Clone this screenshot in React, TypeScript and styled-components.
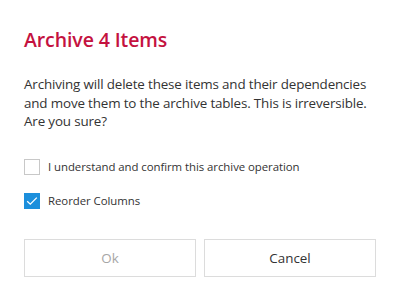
import React, { useState } from "react";
import styled, { createGlobalStyle } from "styled-components";

const Global = createGlobalStyle`
  html, body { margin: 0; padding: 0; background: #ffffff; }
  body { font-family: "Open Sans", "Noto Sans", "Liberation Sans", sans-serif; }
`;

const Dialog = styled.div`
  width: 399px;
  height: 304px;
  box-sizing: border-box;
  padding: 26px 23px 0 24px;
  display: flex;
  flex-direction: column;
  background: #fff;
`;

const Title = styled.h1`
  margin: 0;
  font-size: 19.5px;
  font-weight: 600;
  line-height: 28px;
  color: #c4123f;
  letter-spacing: -0.1px;
`;

const Body = styled.p`
  margin: 21px 0 0;
  font-size: 13.4px;
  line-height: 18.6px;
  color: #333333;
  letter-spacing: -0.15px;
`;

const Options = styled.div`
  margin-top: 28px;
  display: flex;
  flex-direction: column;
  gap: 18px;
`;

const Row = styled.label`
  display: flex;
  align-items: center;
  gap: 8px;
  font-size: 11.4px;
  color: #333333;
  cursor: pointer;
  height: 16px;
  letter-spacing: -0.05px;
`;

const Box = styled.span<{ $checked: boolean }>`
  width: 16px;
  height: 16px;
  box-sizing: border-box;
  border: 1px solid ${(p) => (p.$checked ? "#1c8fdc" : "#c8c8c8")};
  background: ${(p) => (p.$checked ? "#1c8fdc" : "#fff")};
  display: flex;
  align-items: center;
  justify-content: center;
  flex-shrink: 0;
`;

const Buttons = styled.div`
  margin-top: 30px;
  display: grid;
  grid-template-columns: 172px 172px;
  gap: 8px;
`;

const Button = styled.button<{ $disabled?: boolean }>`
  height: 38px;
  box-sizing: border-box;
  border: 1px solid #dcdcdc;
  background: #fff;
  font-family: inherit;
  font-size: 13.4px;
  color: ${(p) => (p.$disabled ? "#a6a6a6" : "#333333")};
  cursor: ${(p) => (p.$disabled ? "default" : "pointer")};
  padding: 0;
`;

const Check = () => (
  <svg width="12" height="10" viewBox="0 0 12 10">
    <path d="M1.2 5.2 L4.3 8.2 L10.8 1.6" fill="none" stroke="#fff" strokeWidth="1.3" />
  </svg>
);

export default function App() {
  const [confirm, setConfirm] = useState(false);
  const [reorder, setReorder] = useState(true);
  return (
    <>
      <Global />
      <Dialog>
        <Title>Archive 4 Items</Title>
        <Body>
          Archiving will delete these items and their dependencies and move them to the archive tables. This is
          irreversible. Are you sure?
        </Body>
        <Options>
          <Row onClick={() => setConfirm(!confirm)}>
            <Box $checked={confirm}>{confirm && <Check />}</Box>
            I understand and confirm this archive operation
          </Row>
          <Row onClick={() => setReorder(!reorder)}>
            <Box $checked={reorder}>{reorder && <Check />}</Box>
            Reorder Columns
          </Row>
        </Options>
        <Buttons>
          <Button $disabled={!confirm}>Ok</Button>
          <Button>Cancel</Button>
        </Buttons>
      </Dialog>
    </>
  );
}
